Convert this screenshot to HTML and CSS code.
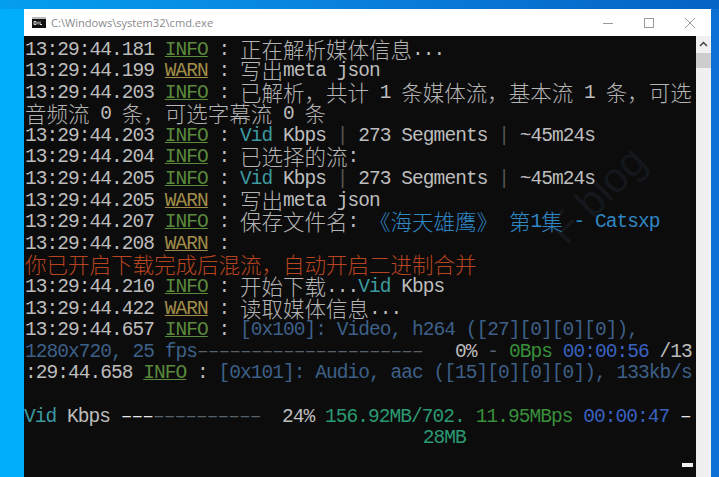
FILE: index.html
```html
<!DOCTYPE html>
<html lang="zh">
<head>
<meta charset="utf-8">
<title>cmd.exe</title>
<link rel="stylesheet" href="styles.css">
</head>
<body>
<div class="window">
  <div class="titlebar">
    <svg class="app-icon" width="14" height="11" viewBox="0 0 14 11"><rect width="14" height="11" fill="#111"/><rect x="0" y="0" width="14" height="2" fill="#bbb"/><path d="M2 4.500h2v3H2zM6 4.500v3M8 4.500v3h2" stroke="#ddd" stroke-width="1" fill="none"/></svg>
    <span class="title">C:\Windows\system32\cmd.exe</span>
    <div class="controls">
      <svg width="10" height="10" viewBox="0 0 10 10"><path d="M0 5.500h10" stroke="#999" fill="none"/></svg>
      <svg width="10" height="10" viewBox="0 0 10 10"><rect x=".5" y=".5" width="9" height="9" stroke="#999" fill="none"/></svg>
      <svg width="10" height="10" viewBox="0 0 10 10"><path d="M0 0l10 10M10 0L0 10" stroke="#999" fill="none"/></svg>
    </div>
  </div>
  <div class="body">
    <div class="console">
      <span class="watermark">F blog</span>
      <div class="line">13:29:44.181 <u class="info">INFO</u> : <b>正在解析媒体信息</b>...</div>
      <div class="line">13:29:44.199 <u class="warn">WARN</u> : <b>写出</b>meta json</div>
      <div class="line">13:29:44.203 <u class="info">INFO</u> : <b>已解析，共计</b> 1 <b>条媒体流，基本流</b> 1 <b>条，可选</b></div>
      <div class="line"><b>音频流</b> 0 <b>条，可选字幕流</b> 0 <b>条</b></div>
      <div class="line">13:29:44.203 <u class="info">INFO</u> : <span class="vid">Vid</span> Kbps <span class="bar">|</span> 273 Segments <span class="bar">|</span> ~45m24s</div>
      <div class="line">13:29:44.204 <u class="info">INFO</u> : <b>已选择的流</b>:</div>
      <div class="line">13:29:44.205 <u class="info">INFO</u> : <span class="vid">Vid</span> Kbps <span class="bar">|</span> 273 Segments <span class="bar">|</span> ~45m24s</div>
      <div class="line">13:29:44.205 <u class="warn">WARN</u> : <b>写出</b>meta json</div>
      <div class="line">13:29:44.207 <u class="info">INFO</u> : <b>保存文件名</b>: <span class="file"><b>《海天雄鹰》</b> <b>第</b>1<b>集</b> - Catsxp</span></div>
      <div class="line">13:29:44.208 <u class="warn">WARN</u> :</div>
      <div class="line red"><b>你已开启下载完成后混流，自动开启二进制合并</b></div>
      <div class="line">13:29:44.210 <u class="info">INFO</u> : <b>开始下载</b>...<span class="vid">Vid</span> Kbps</div>
      <div class="line">13:29:44.422 <u class="warn">WARN</u> : <b>读取媒体信息</b>...</div>
      <div class="line">13:29:44.657 <u class="info">INFO</u> : <span class="meta">[0x100]: Video, h264 ([27][0][0][0]),</span></div>
      <div class="line"><span class="meta">1280x720, 25 fps</span><span class="dash">–––––––––––––––––––––</span>   0% <span class="dash">-</span> <span class="speed">0Bps</span> <span class="eta">00:00:56</span> /13</div>
      <div class="line">:29:44.658 <u class="info">INFO</u> : <span class="meta">[0x101]: Audio, aac ([15][0][0][0]), 133kb/s</span></div>
      <div class="line"></div>
      <div class="line shift"><span class="vid">Vid</span> Kbps <span class="bright">–––</span><span class="dash">––––––––––</span>  24% <span class="size">156.92MB/702.</span> <span class="speed">11.95MBps</span> <span class="eta">00:00:47</span> <span class="bright">–</span></div>
      <div class="line">                                     <span class="size">28MB</span></div>
      <span class="cursor"></span>
    </div>
    <div class="scrollbar">
      <svg class="arrow" width="15" height="17" viewBox="0 0 15 17"><path d="M4 10l3.500-3.500L11 10" stroke="#444" stroke-width="1.500" fill="none"/></svg>
      <div class="thumb"></div>
    </div>
  </div>
</div>
</body>
</html>
```
FILE: styles.css
```css
* { box-sizing: border-box; }
html, body { margin: 0; height: 100%; }
body {
  width: 719px;
  height: 477px;
  overflow: hidden;
  padding: 9px 8px 0 24px;
  background: linear-gradient(90deg, #00aefc 0, #00aefc 24px, #0c6fd3 24px, #0c6fd3 100%);
  position: relative;
}
body::before {
  content: "";
  display: block;
  position: absolute;
  left: 0; top: 0; right: 0;
  height: 9px;
  background: linear-gradient(90deg, #049fee, #0a7fdc 50%, #0463c4);
}
.window { position: relative; height: 468px; display: flex; flex-direction: column; background: #fff; }
.titlebar {
  height: 27px;
  display: flex;
  align-items: center;
  padding-left: 8px;
  background: #fff;
  flex: none;
}
.app-icon { margin-right: 5px; }
.title { font: 11.1px "Open Sans", "Liberation Sans", sans-serif; color: #8a8a8a; }
.controls { margin-left: auto; display: flex; gap: 31px; padding-right: 16px; }
.body { flex: 1; display: flex; min-height: 0; }
.console {
  position: relative;
  flex: 1;
  background: #0c0c0c;
  padding: 3.5px 0 0 1px;
  color: #bdbdbd;
  font: 19.5px/21.6px "Liberation Mono", monospace;
  letter-spacing: -0.95px;
  overflow: hidden;
}
.line { position: relative; height: 21.6px; white-space: pre; }
.line b { font: 300 21.5px/0 "Noto Sans CJK SC", sans-serif; letter-spacing: 0; vertical-align: -2.5px; color: #b4b4b4; }
.shift { margin-left: -1px; }
u.info { color: #5a8a3c; }
u.warn { color: #a08c48; }
.vid { color: #3b9aa0; }
.bar { color: #555; }
.file, .line .file b { color: #2f87c4; }
.line.red b { color: #b8441f; }
.meta { color: #3d6088; }
.dash { color: #56616b; }
.bright { color: #e8e8e8; }
.speed { color: #38903a; }
.eta { color: #3a62c0; }
.size { color: #2a9a72; }
.cursor { position: absolute; left: 658px; top: 427px; width: 11px; height: 4px; background: #f0f0f0; }
.watermark {
  position: absolute;
  left: 515px;
  top: 135px;
  font: 42px "Liberation Sans", sans-serif;
  letter-spacing: 0;
  white-space: pre;
  color: #14181c;
  transform: rotate(-45deg);
}
.scrollbar { width: 15px; flex: none; background: #f0f0f0; display: flex; flex-direction: column; }
.arrow { flex: none; }
.thumb { height: 15px; background: #cdcdcd; }
```
